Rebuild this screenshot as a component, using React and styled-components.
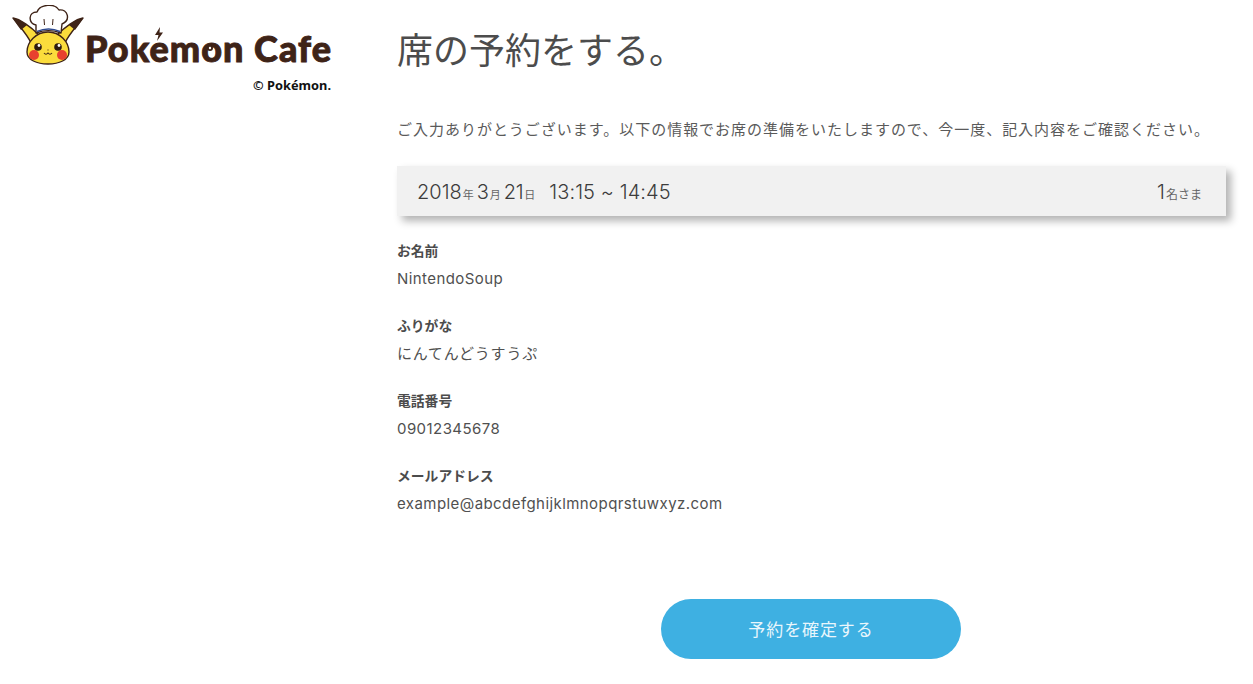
import React from 'react';
import styled, { createGlobalStyle } from 'styled-components';

const GlobalStyle = createGlobalStyle`
  html, body { margin: 0; padding: 0; background: #fff; }
  body {
    color: #4a4a4a;
    font-family: Inter, "Noto Sans CJK JP", sans-serif;
  }
`;

const Page = styled.div`
  display: flex;
  width: 1253px;
  height: 684px;
  overflow: hidden;
`;

const Side = styled.aside`
  width: 397px;
  flex: none;
  padding: 5px 0 0 12px;
  box-sizing: border-box;
`;

const Logo = styled.div`
  display: flex;
  flex-direction: column;
  width: 320px;
`;

const LogoTop = styled.div`
  display: flex;
  align-items: flex-start;
`;

const LogoMark = styled.svg`
  flex: none;
`;

const LogoWord = styled.div`
  position: relative;
  margin: 21px 0 0 0;
  color: #3e2317;
  font-family: Lato, sans-serif;
  font-weight: 900;
  font-size: 36px;
  line-height: 44px;
  letter-spacing: 1.05px;
  -webkit-text-stroke: 0.9px #3e2317;
  white-space: nowrap;
`;

const Bolt = styled.svg`
  position: absolute;
  left: 69px;
  top: 1px;
`;

const BallDot = styled.svg`
  position: absolute;
  left: 121px;
  top: 18px;
`;

const Copy = styled.div`
  align-self: flex-end;
  margin-top: 7px;
  color: #111;
  font-family: "Noto Sans", sans-serif;
  font-weight: 700;
  font-size: 12.8px;
  line-height: 16px;
  padding-right: 1px;
`;

const Main = styled.main`
  width: 829px;
  flex: none;
`;

const Title = styled.h1`
  margin: 27px 0 0;
  font-weight: 400;
  font-size: 36px;
  line-height: 48px;
  color: #4c4c4c;
`;

const Lead = styled.p`
  margin: 43px 0 0;
  font-size: 15px;
  line-height: 24px;
  letter-spacing: 0.98px;
  white-space: nowrap;
  color: #5a5a5a;
`;

const Summary = styled.div`
  display: flex;
  align-items: center;
  justify-content: space-between;
  height: 49px;
  margin-top: 24px;
  padding: 1px 24px 0 20px;
  background: #f1f1f1;
  box-shadow: 5px 5px 8px rgba(0, 0, 0, 0.3);
`;

const BigText = styled.span`
  font-size: 20px;
  font-weight: 300;
  letter-spacing: ${p => p.$spacing || 0}px;
  margin-left: ${p => p.$gap || 0}px;
  color: #3c3c3c;
`;

const Unit = styled.span`
  font-size: ${p => (p.$large ? 12 : 11)}px;
  margin-left: 1px;
  color: #666;
`;

const Field = styled.div`
  margin-top: ${p => (p.$first ? 25 : 22)}px;
`;

const Label = styled.div`
  font-size: 13.8px;
  font-weight: 700;
  line-height: 20px;
  color: #4c4c4c;
`;

const Value = styled.div`
  margin-top: 3px;
  font-size: 15px;
  line-height: 30px;
  letter-spacing: ${p => (p.$kana ? 0.8 : 0.43)}px;
  color: #505050;
`;

const Actions = styled.div`
  display: flex;
  justify-content: center;
  margin-top: 80px;
  padding-right: 1px;
`;

const Submit = styled.button`
  width: 300px;
  height: 60px;
  padding: 0 0 2px;
  border: 0;
  border-radius: 30px;
  background: #3eb0e2;
  color: #e9f6fc;
  font-family: inherit;
  font-size: 17px;
  letter-spacing: 0.9px;
`;

const Pikachu = () => (
  <LogoMark width="73" height="64" viewBox="12 5 73 64">
    {/* ears */}
    <path d="M13 18 C20 19 31 27 39 35 L31 43 C27 34 19 26 13 18 Z" fill="#fbdc3c" stroke="#3e2317" strokeWidth="1.4" strokeLinejoin="round" />
    <path d="M13 18 C18 19 23 22 27 25 L21 30 C18 26 15 22 13 18 Z" fill="#3e2317" />
    <path d="M83 18 C76 19 65 27 57 35 L65 43 C69 34 77 26 83 18 Z" fill="#fbdc3c" stroke="#3e2317" strokeWidth="1.4" strokeLinejoin="round" />
    <path d="M83 18 C78 19 73 22 69 25 L75 30 C78 26 81 22 83 18 Z" fill="#3e2317" />
    {/* head */}
    <path d="M48 32 C60 32 69 42 69 52 C69 60 59 64 48 64 C37 64 27 60 27 52 C27 42 36 32 48 32 Z" fill="#fbdc3c" stroke="#3e2317" strokeWidth="1.4" />
    {/* cheeks */}
    <circle cx="34" cy="55" r="5" fill="#e8402f" />
    <circle cx="62" cy="55" r="5" fill="#e8402f" />
    {/* eyes */}
    <circle cx="38" cy="47" r="3.8" fill="#2d1a10" />
    <circle cx="58" cy="47" r="3.8" fill="#2d1a10" />
    <circle cx="39" cy="45.5" r="1.4" fill="#fff" />
    <circle cx="59" cy="45.5" r="1.4" fill="#fff" />
    {/* mouth */}
    <path d="M44 53 Q46 55.5 48 53 Q50 55.5 52 53" fill="none" stroke="#3e2317" strokeWidth="1.1" />
    <path d="M47.5 50 L48.5 50" stroke="#3e2317" strokeWidth="1" />
    {/* hat */}
    <path d="M36 33 L36 25 C28 23 28 12 37 12 C40 4 55 3 59 10 C68 9 71 20 62 24 L61 33 C53 30 44 30 36 33 Z" fill="#fff" stroke="#3e2317" strokeWidth="1.4" strokeLinejoin="round" />
    <path d="M37 31.5 C44 28.5 53 28.5 60 31.5" fill="none" stroke="#2f4a8f" strokeWidth="1.4" />
    <path d="M44 19 L44.5 25 M53 19 L52.5 25" fill="none" stroke="#3e2317" strokeWidth="1" />
  </LogoMark>
);

export default function App() {
  const fields = [
    ['お名前', 'NintendoSoup'],
    ['ふりがな', 'にんてんどうすうぷ', true],
    ['電話番号', '09012345678'],
    ['メールアドレス', 'example@abcdefghijklmnopqrstuwxyz.com'],
  ];
  return (
    <Page>
      <GlobalStyle />
      <Side>
        <Logo>
          <LogoTop>
            <Pikachu />
            <LogoWord>
              Pokemon Cafe
              <Bolt width="10" height="14" viewBox="0 0 10 14">
                <path d="M6 0 L1 8 L4.5 8 L3 14 L9 5.5 L5.5 5.5 Z" fill="#3e2317" />
              </Bolt>
              <BallDot width="8" height="8" viewBox="0 0 8 8">
                <circle cx="4" cy="4" r="3" fill="#3e2317" />
                <circle cx="4" cy="4" r="1.2" fill="#fff" />
              </BallDot>
            </LogoWord>
          </LogoTop>
          <Copy>© Pokémon.</Copy>
        </Logo>
      </Side>
      <Main>
        <Title>席の予約をする。</Title>
        <Lead>ご入力ありがとうございます。以下の情報でお席の準備をいたしますので、今一度、記入内容をご確認ください。</Lead>
        <Summary>
          <div>
            <BigText>2018</BigText><Unit>年</Unit>
            <BigText $gap={3}>3</BigText><Unit>月</Unit>
            <BigText $gap={3} $spacing={-0.4}>21</BigText><Unit>日</Unit>
            <BigText $gap={14} $spacing={0.1}>13:15 ~ 14:45</BigText>
          </div>
          <div>
            <BigText>1</BigText><Unit $large>名さま</Unit>
          </div>
        </Summary>
        {fields.map(([label, value, kana], i) => (
          <Field key={label} $first={i === 0}>
            <Label>{label}</Label>
            <Value $kana={kana}>{value}</Value>
          </Field>
        ))}
        <Actions>
          <Submit>予約を確定する</Submit>
        </Actions>
      </Main>
    </Page>
  );
}
